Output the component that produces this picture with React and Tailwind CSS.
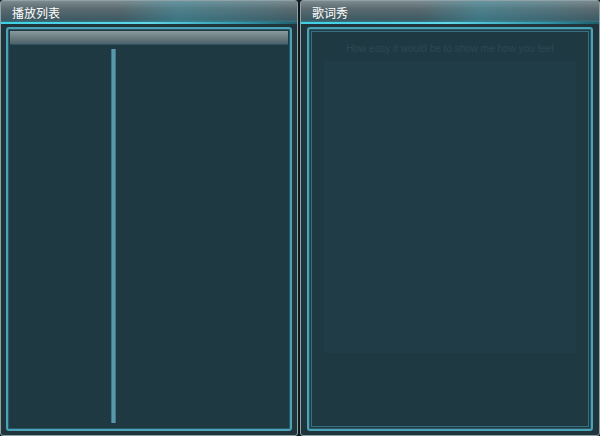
const FONT = '"Noto Sans CJK SC", "Liberation Sans", sans-serif';

function TitleBar({ title }) {
  return (
    <div className="relative h-[23px] shrink-0 bg-[linear-gradient(180deg,#7d8a8f_0%,#5a6a70_35%,#3e5a63_80%,#2f7f90_100%)]">
      <div className="absolute inset-0 bg-[linear-gradient(90deg,rgba(0,0,0,0)_0%,rgba(0,0,0,0)_40%,rgba(60,170,190,0.35)_60%,rgba(60,170,190,0.15)_85%,rgba(0,0,0,0)_100%)]" />
      <div className="absolute bottom-0 left-0 right-0 h-[2px] bg-[linear-gradient(90deg,#3fd0e6_0%,#5fd8ea_50%,#2d8fa2_85%,#1f5c68_100%)]" />
      <span className="absolute left-[11px] top-[4px] text-[12px] leading-[16px] text-white" style={{ fontFamily: FONT }}>
        {title}
      </span>
    </div>
  );
}

function PlaylistPanel() {
  return (
    <div className="flex h-full w-[298px] flex-col rounded-[3px] border border-[#8fa2a8] bg-[#20343c]">
      <TitleBar title="播放列表" />
      <div className="flex flex-1 px-[5px] pt-[3px] pb-[4px]">
        <div className="flex flex-1 flex-col rounded-[3px] border-2 border-[#4aa3b6] bg-[#1f3943] p-[2px] shadow-[inset_0_0_0_1px_#2a5866]">
          <div className="h-[14px] shrink-0 bg-[linear-gradient(180deg,#8a9a9f_0%,#65777d_60%,#4d6168_100%)] border-b border-[#2b5260]" />
          <div className="flex flex-1 px-[2px] pt-[4px] pb-[4px]">
            <div className="w-[99px]" />
            <div className="w-[5px] border-x border-[#3a7a8c] bg-[#5b97a8]" />
            <div className="flex-1" />
          </div>
        </div>
      </div>
    </div>
  );
}

function LyricPanel() {
  return (
    <div className="flex h-full flex-1 flex-col rounded-[3px] border border-[#8fa2a8] bg-[#20343c]">
      <TitleBar title="歌词秀" />
      <div className="flex flex-1 px-[6px] pt-[3px] pb-[4px]">
        <div className="flex flex-1 flex-col rounded-[3px] border-2 border-[#4aa3b6] bg-[#1f3943] p-[2px] shadow-[inset_0_0_0_1px_#2a5866]">
          <div className="flex flex-1 flex-col border border-[#3a7182] bg-[#1f3943] pt-[10px]">
            <div className="text-center text-[10px] leading-[14px] text-[#2b4853]" style={{ fontFamily: '"Liberation Sans", sans-serif' }}>
              How easy it would be to show me how you feel
            </div>
            <div className="mx-[12px] mt-[5px] h-[292px] bg-[#203d47]" />
          </div>
        </div>
      </div>
    </div>
  );
}

export default function App() {
  return (
    <div className="flex h-[436px] w-[600px] gap-[2px] bg-[#101a1e]">
      <PlaylistPanel />
      <LyricPanel />
    </div>
  );
}
